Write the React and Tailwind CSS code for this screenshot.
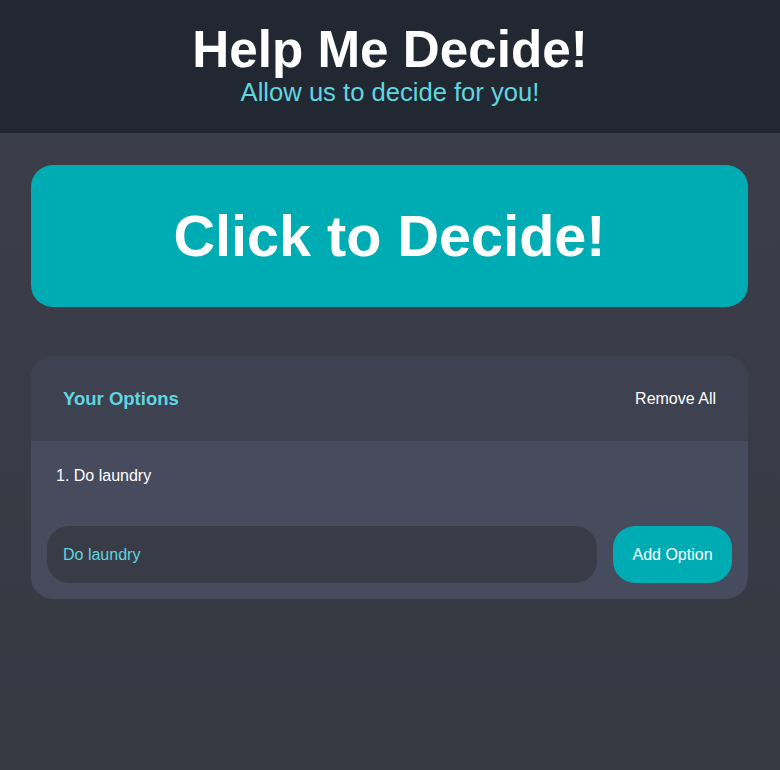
import React, { useState } from "react";

const App = () => {
  const [options, setOptions] = useState(["Do laundry"]);
  const [value, setValue] = useState("Do laundry");

  const addOption = () => {
    if (!value.trim()) return;
    setOptions((prev) => [...prev, value.trim()]);
  };

  return (
    <div className="min-h-[770px] bg-gradient-to-b from-[#3c3f4a] to-[#363942] font-['Liberation_Sans',Arial,sans-serif]">
      {/* Header */}
      <header className="h-[133px] bg-[#222832] text-center pt-[24px]">
        <h1 className="text-[51.2px] font-bold leading-none text-white">Help Me Decide!</h1>
        <p className="mt-[5px] text-[25.6px] leading-none text-[#60d6e0]">Allow us to decide for you!</p>
      </header>

      <main className="pl-[31px] pr-[32px] pt-[32px]">
        <button
          type="button"
          className="w-full h-[142px] rounded-[22px] bg-[#00acb4] text-white text-[57.6px] font-bold flex items-center justify-center"
        >
          Click to Decide!
        </button>

        <div className="mt-[49px] rounded-[22px] overflow-hidden bg-[#464b5e]">
          <div className="h-[85px] bg-[#3d4150] flex items-center justify-between px-[32px]">
            <h3 className="text-[18.5px] font-bold text-[#60d6e0]">Your Options</h3>
            <button type="button" className="text-[16px] text-white">Remove All</button>
          </div>

          <div className="pt-[23px] px-[25px]">
            {options.map((opt, i) => (
              <p key={i} className="text-[16px] leading-[24px] text-white">
                {i + 1}. {opt}
              </p>
            ))}
          </div>

          <form
            className="flex gap-[16px] px-[16px] pt-[38px] pb-[16px]"
            onSubmit={(e) => {
              e.preventDefault();
              addOption();
            }}
          >
            <input
              type="text"
              value={value}
              onChange={(e) => setValue(e.target.value)}
              className="flex-1 h-[57px] rounded-[22px] bg-[#393c46] px-[16px] text-[16px] text-[#60d6e0] outline-none"
            />
            <button
              type="submit"
              className="w-[119px] h-[57px] rounded-[22px] bg-[#00acb4] text-[16px] text-white"
            >
              Add Option
            </button>
          </form>
        </div>
      </main>
    </div>
  );
};

export default App;
